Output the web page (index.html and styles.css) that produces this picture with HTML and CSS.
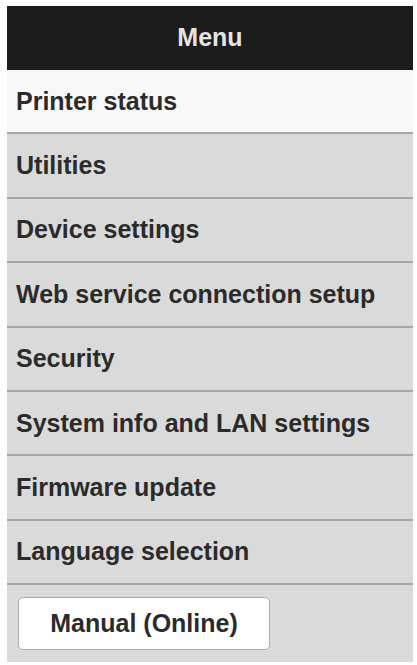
FILE: index.html
```html
<!DOCTYPE html>
<html lang="en">
<head>
<meta charset="utf-8">
<title>Menu</title>
<link rel="stylesheet" href="styles.css">
</head>
<body>
<div class="menu">
  <div class="menu-header">Menu</div>
  <ul class="menu-list">
    <li class="menu-item active">Printer status</li>
    <li class="menu-item">Utilities</li>
    <li class="menu-item">Device settings</li>
    <li class="menu-item">Web service connection setup</li>
    <li class="menu-item">Security</li>
    <li class="menu-item">System info and LAN settings</li>
    <li class="menu-item">Firmware update</li>
    <li class="menu-item">Language selection</li>
  </ul>
  <div class="menu-footer">
    <button class="manual-btn" type="button">Manual (Online)</button>
  </div>
</div>
</body>
</html>
```
FILE: styles.css
```css
html, body {
  margin: 0;
  padding: 0;
  background: #ffffff;
}

body {
  font-family: "Liberation Sans", Arial, sans-serif;
  font-weight: bold;
  font-size: 25px;
  color: #2b2b2b;
}

.menu {
  margin: 6px 4px 3px 7px;
  width: 406px;
  background: #dadada;
}

.menu-header {
  height: 64px;
  background: #1c1c1c;
  color: #e4e4e4;
  display: flex;
  align-items: center;
  justify-content: center;
  padding-bottom: 2px;
  box-sizing: border-box;
}

.menu-list {
  list-style: none;
  margin: 0;
  padding: 0;
}

.menu-item {
  height: 62.4px;
  border-bottom: 2px solid #a6a6a6;
  display: flex;
  align-items: center;
  padding-left: 9px;
  background: #dadada;
  white-space: nowrap;
}

.menu-item.active {
  background: #f8f8f8;
}

.menu-footer {
  padding: 12px 0 12px 11px;
}

.manual-btn {
  display: block;
  width: 252px;
  height: 53px;
  border: 1px solid #a9a9a9;
  border-radius: 5px;
  background: #ffffff;
  font-family: inherit;
  font-weight: bold;
  font-size: 25px;
  color: #2b2b2b;
  padding: 0;
}
```
